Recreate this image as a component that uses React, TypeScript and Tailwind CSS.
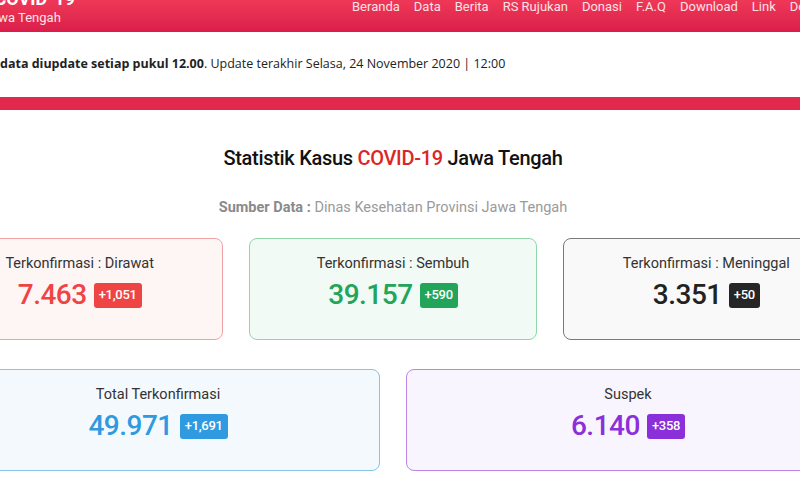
const navItems = ["Beranda", "Data", "Berita", "RS Rujukan", "Donasi", "F.A.Q", "Download", "Link", "Dokumen"];

type Stat = {
  label: string;
  value: string;
  delta: string;
  box: string;
  num: string;
  badge: string;
};

const topStats: Stat[] = [
  {
    label: "Terkonfirmasi : Dirawat",
    value: "7.463",
    delta: "+1,051",
    box: "bg-[#fef5f5] border-[#f0a3a6]",
    num: "text-[#ef4444]",
    badge: "bg-[#ef4444]",
  },
  {
    label: "Terkonfirmasi : Sembuh",
    value: "39.157",
    delta: "+590",
    box: "bg-[#f1faf5] border-[#8fd7ab]",
    num: "text-[#22a559]",
    badge: "bg-[#22a559]",
  },
  {
    label: "Terkonfirmasi : Meninggal",
    value: "3.351",
    delta: "+50",
    box: "bg-[#f9f9f9] border-[#7a7a7a]",
    num: "text-[#222222]",
    badge: "bg-[#262626]",
  },
];

const bottomStats: Stat[] = [
  {
    label: "Total Terkonfirmasi",
    value: "49.971",
    delta: "+1,691",
    box: "bg-[#f4f9fe] border-[#86c3e8]",
    num: "text-[#2f9ae0]",
    badge: "bg-[#2f9ae0]",
  },
  {
    label: "Suspek",
    value: "6.140",
    delta: "+358",
    box: "bg-[#f8f5fe] border-[#bb86e6]",
    num: "text-[#8a2fd9]",
    badge: "bg-[#8a2fd9]",
  },
];

const StatCard = ({ s }: { s: Stat }) => (
  <div className={`h-[102px] rounded-lg border flex flex-col items-center pt-[15px] ${s.box}`}>
    <span className="text-[14.5px] text-[#333] leading-5">{s.label}</span>
    <div className="flex items-center gap-[7px] mt-[5px]">
      <span className={`text-[28px] font-medium tracking-[-0.5px] leading-8 ${s.num}`}>{s.value}</span>
      <span className={`h-[25px] px-[5px] rounded-[3px] flex items-center text-white text-[13px] font-medium tracking-[-0.3px] ${s.badge}`}>
        {s.delta}
      </span>
    </div>
  </div>
);

export default function App() {
  return (
    <div className="w-[800px] h-[500px] overflow-hidden bg-white [font-family:Roboto,'Liberation_Sans',sans-serif]">
      {/* Header */}
      <header className="h-[32px] bg-gradient-to-b from-[#ef3857] to-[#da1d4a] flex items-start overflow-hidden">
        <div className="w-[91px] shrink-0 flex flex-col -mt-[13px] -ml-[16px] text-white">
          <span className="self-end whitespace-nowrap text-[18px] font-bold leading-[23px]">Tanggap COVID-19</span>
          <span className="whitespace-nowrap text-[13px] leading-4 text-[#fde3e8]">Jawa Tengah</span>
        </div>
        <nav className="ml-[277px] flex gap-[14px] -mt-[3px] text-[13px] text-[#fde1e6] whitespace-nowrap">
          {navItems.map((n) => (
            <span key={n}>{n}</span>
          ))}
        </nav>
      </header>

      {/* Update strip */}
      <div className="h-[65px] flex items-center pb-[1px] [font-family:'Open_Sans',sans-serif] text-[12.5px] text-[#222] whitespace-nowrap">
        <span className="font-bold">data diupdate setiap pukul 12.00</span>
        <span>. Update terakhir Selasa, 24 November 2020 | 12:00</span>
      </div>
      <div className="h-[13px] bg-[#e3284e]" />

      {/* Statistics */}
      <section className="w-[914px] -ml-[64px] flex flex-col items-center pt-[34px]">
        <h2 className="text-[20px] font-medium text-[#111] tracking-[-0.3px] leading-7">
          Statistik Kasus <span className="text-[#dc2626]">COVID-19</span> Jawa Tengah
        </h2>
        <p className="mt-[26px] text-[14.5px] text-[#9a9a9a] leading-5">
          <span className="font-bold text-[#8a8a8a]">Sumber Data :</span> Dinas Kesehatan Provinsi Jawa Tengah
        </p>
        <div className="w-full grid grid-cols-3 gap-[26px] mt-[20px]">
          {topStats.map((s) => (
            <StatCard key={s.label} s={s} />
          ))}
        </div>
        <div className="w-full grid grid-cols-2 gap-[26px] mt-[29px]">
          {bottomStats.map((s) => (
            <StatCard key={s.label} s={s} />
          ))}
        </div>
      </section>
    </div>
  );
}
